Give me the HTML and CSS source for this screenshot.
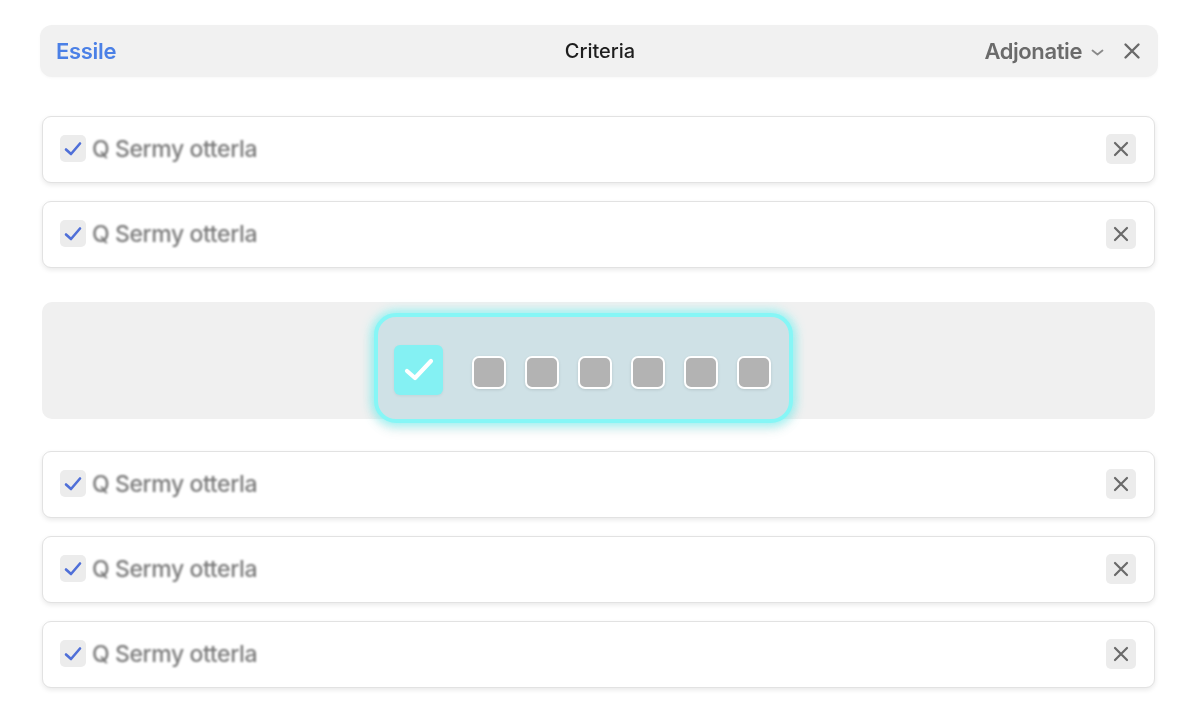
FILE: index.html
```html
<!DOCTYPE html>
<html>
<head>
<meta charset="utf-8">
<link rel="stylesheet" href="styles.css">
</head>
<body>
<div class="page">
  <header class="topbar">
    <span class="brand">Essile</span>
    <span class="title">Criteria</span>
    <div class="actions">
      <span class="menu">Adjonatie
        <svg class="chev" width="15" height="9" viewBox="0 0 15 9"><path d="M2.5 2.5 L7.5 6.5 L12.5 2.5" fill="none" stroke="#8a8a8a" stroke-width="1.8" stroke-linecap="round" stroke-linejoin="round"/></svg>
      </span>
      <svg class="close" width="20" height="20" viewBox="0 0 20 20"><path d="M3.5 3.5 L16.5 16.5 M16.5 3.5 L3.5 16.5" stroke="#6a6a6a" stroke-width="2.4" stroke-linecap="round"/></svg>
    </div>
  </header>

  <div class="list first">
    <div class="row">
      <span class="cb"><svg width="20" height="20" viewBox="0 0 20 20"><path d="M3 10.5 L8 15 L17 4.5" fill="none" stroke="#4f6fd8" stroke-width="2.6" stroke-linecap="round" stroke-linejoin="round"/></svg></span>
      <span class="label">Q Sermy otterla</span>
      <span class="x"><svg width="18" height="18" viewBox="0 0 18 18"><path d="M3 3 L15 15 M15 3 L3 15" stroke="#6a6a6a" stroke-width="2.2" stroke-linecap="round"/></svg></span>
    </div>
    <div class="row">
      <span class="cb"><svg width="20" height="20" viewBox="0 0 20 20"><path d="M3 10.5 L8 15 L17 4.5" fill="none" stroke="#4f6fd8" stroke-width="2.6" stroke-linecap="round" stroke-linejoin="round"/></svg></span>
      <span class="label">Q Sermy otterla</span>
      <span class="x"><svg width="18" height="18" viewBox="0 0 18 18"><path d="M3 3 L15 15 M15 3 L3 15" stroke="#6a6a6a" stroke-width="2.2" stroke-linecap="round"/></svg></span>
    </div>
  </div>

  <section class="band">
    <div class="pill">
      <span class="big-check"><svg width="34" height="30" viewBox="0 0 34 30"><path d="M5 16 L13 23 L29 6" fill="none" stroke="#ffffff" stroke-width="4.2" stroke-linecap="round" stroke-linejoin="round"/></svg></span>
      <div class="boxes">
        <span class="box"></span>
        <span class="box"></span>
        <span class="box"></span>
        <span class="box"></span>
        <span class="box"></span>
        <span class="box"></span>
      </div>
    </div>
  </section>

  <div class="list second">
    <div class="row">
      <span class="cb"><svg width="20" height="20" viewBox="0 0 20 20"><path d="M3 10.5 L8 15 L17 4.5" fill="none" stroke="#4f6fd8" stroke-width="2.6" stroke-linecap="round" stroke-linejoin="round"/></svg></span>
      <span class="label">Q Sermy otterla</span>
      <span class="x"><svg width="18" height="18" viewBox="0 0 18 18"><path d="M3 3 L15 15 M15 3 L3 15" stroke="#6a6a6a" stroke-width="2.2" stroke-linecap="round"/></svg></span>
    </div>
    <div class="row">
      <span class="cb"><svg width="20" height="20" viewBox="0 0 20 20"><path d="M3 10.5 L8 15 L17 4.5" fill="none" stroke="#4f6fd8" stroke-width="2.6" stroke-linecap="round" stroke-linejoin="round"/></svg></span>
      <span class="label">Q Sermy otterla</span>
      <span class="x"><svg width="18" height="18" viewBox="0 0 18 18"><path d="M3 3 L15 15 M15 3 L3 15" stroke="#6a6a6a" stroke-width="2.2" stroke-linecap="round"/></svg></span>
    </div>
    <div class="row">
      <span class="cb"><svg width="20" height="20" viewBox="0 0 20 20"><path d="M3 10.5 L8 15 L17 4.5" fill="none" stroke="#4f6fd8" stroke-width="2.6" stroke-linecap="round" stroke-linejoin="round"/></svg></span>
      <span class="label">Q Sermy otterla</span>
      <span class="x"><svg width="18" height="18" viewBox="0 0 18 18"><path d="M3 3 L15 15 M15 3 L3 15" stroke="#6a6a6a" stroke-width="2.2" stroke-linecap="round"/></svg></span>
    </div>
  </div>
</div>
</body>
</html>
```

FILE: styles.css
```css
* { box-sizing: border-box; }
html, body { margin: 0; padding: 0; background: #ffffff; }
body {
  font-family: Inter, "Open Sans", "Liberation Sans", sans-serif;
  width: 1200px;
  height: 720px;
  overflow: hidden;
}
.page {
  padding: 25px 42px 0 40px;
}
.topbar {
  height: 52px;
  background: #f1f1f1;
  border-radius: 12px;
  display: grid;
  grid-template-columns: 1fr auto 1fr;
  align-items: center;
  padding: 0 16px 0 16px;
  box-shadow: 0 1px 3px rgba(0,0,0,0.03);
}
.brand {
  color: #4b80e6;
  font-size: 22px;
  font-weight: 600;
  letter-spacing: -0.3px;
  filter: blur(0.6px);
}
.title {
  font-size: 20px;
  color: #1e1e1e;
  font-weight: 500;
  margin-left: 2px;
  filter: blur(0.3px);
}
.actions {
  justify-self: end;
  display: flex;
  align-items: center;
  gap: 17px;
}
.menu {
  color: #6b6b6b;
  font-size: 22px;
  font-weight: 600;
  letter-spacing: -0.4px;
  display: flex;
  align-items: center;
  gap: 8px;
  filter: blur(0.7px);
}
.chev { margin-top: 2px; }
.close { filter: blur(0.5px); }

.list {
  display: flex;
  flex-direction: column;
  gap: 18px;
  padding: 0 3px 0 2px;
}
.list.first { margin-top: 39px; }
.list.second { margin-top: 32px; }
.row {
  height: 67px;
  background: #ffffff;
  border: 1px solid #e2e2e2;
  border-radius: 9px;
  box-shadow: 0 2px 5px rgba(0,0,0,0.09);
  display: flex;
  align-items: center;
  padding: 0 18px 0 17px;
}
.cb {
  width: 26px;
  height: 27px;
  background: #ececec;
  border-radius: 5px;
  display: flex;
  align-items: center;
  justify-content: center;
  margin-right: 6px;
  margin-top: -2px;
  filter: blur(0.5px);
}
.label {
  font-size: 23px;
  font-weight: 500;
  color: #7b7b7b;
  letter-spacing: -0.4px;
  margin-top: -2px;
  filter: blur(1px);
  flex: 1;
}
.x {
  width: 30px;
  height: 30px;
  background: #ececec;
  border-radius: 5px;
  display: flex;
  align-items: center;
  justify-content: center;
  margin-top: -2px;
  filter: blur(0.4px);
}

.band {
  margin: 34px 3px 0 2px;
  height: 117px;
  background: #f0f0f0;
  border-radius: 10px;
  display: flex;
  align-items: center;
  justify-content: center;
}
.pill {
  margin-left: -30px;
  margin-top: 15px;
  width: 419px;
  height: 110px;
  background: #cfe1e6;
  border: 4px solid #86f6f6;
  border-radius: 22px;
  box-shadow: 0 0 10px 3px rgba(120, 245, 245, 0.7), 0 6px 14px rgba(0,0,0,0.08);
  display: flex;
  align-items: center;
  padding: 0 0 0 16px;
}
.big-check {
  width: 49px;
  height: 50px;
  background: #84f1f3;
  border-radius: 6px;
  display: flex;
  align-items: center;
  justify-content: center;
  margin-right: 29px;
  margin-top: 4px;
  box-shadow: 0 1px 3px rgba(0,0,0,0.06);
}
.boxes {
  display: flex;
  gap: 19px;
  margin-top: 8px;
}
.box {
  width: 34px;
  height: 33px;
  background: #b3b3b3;
  border: 2px solid #ffffff;
  border-radius: 7px;
  box-shadow: 0 1px 3px rgba(0,0,0,0.12);
}
```
